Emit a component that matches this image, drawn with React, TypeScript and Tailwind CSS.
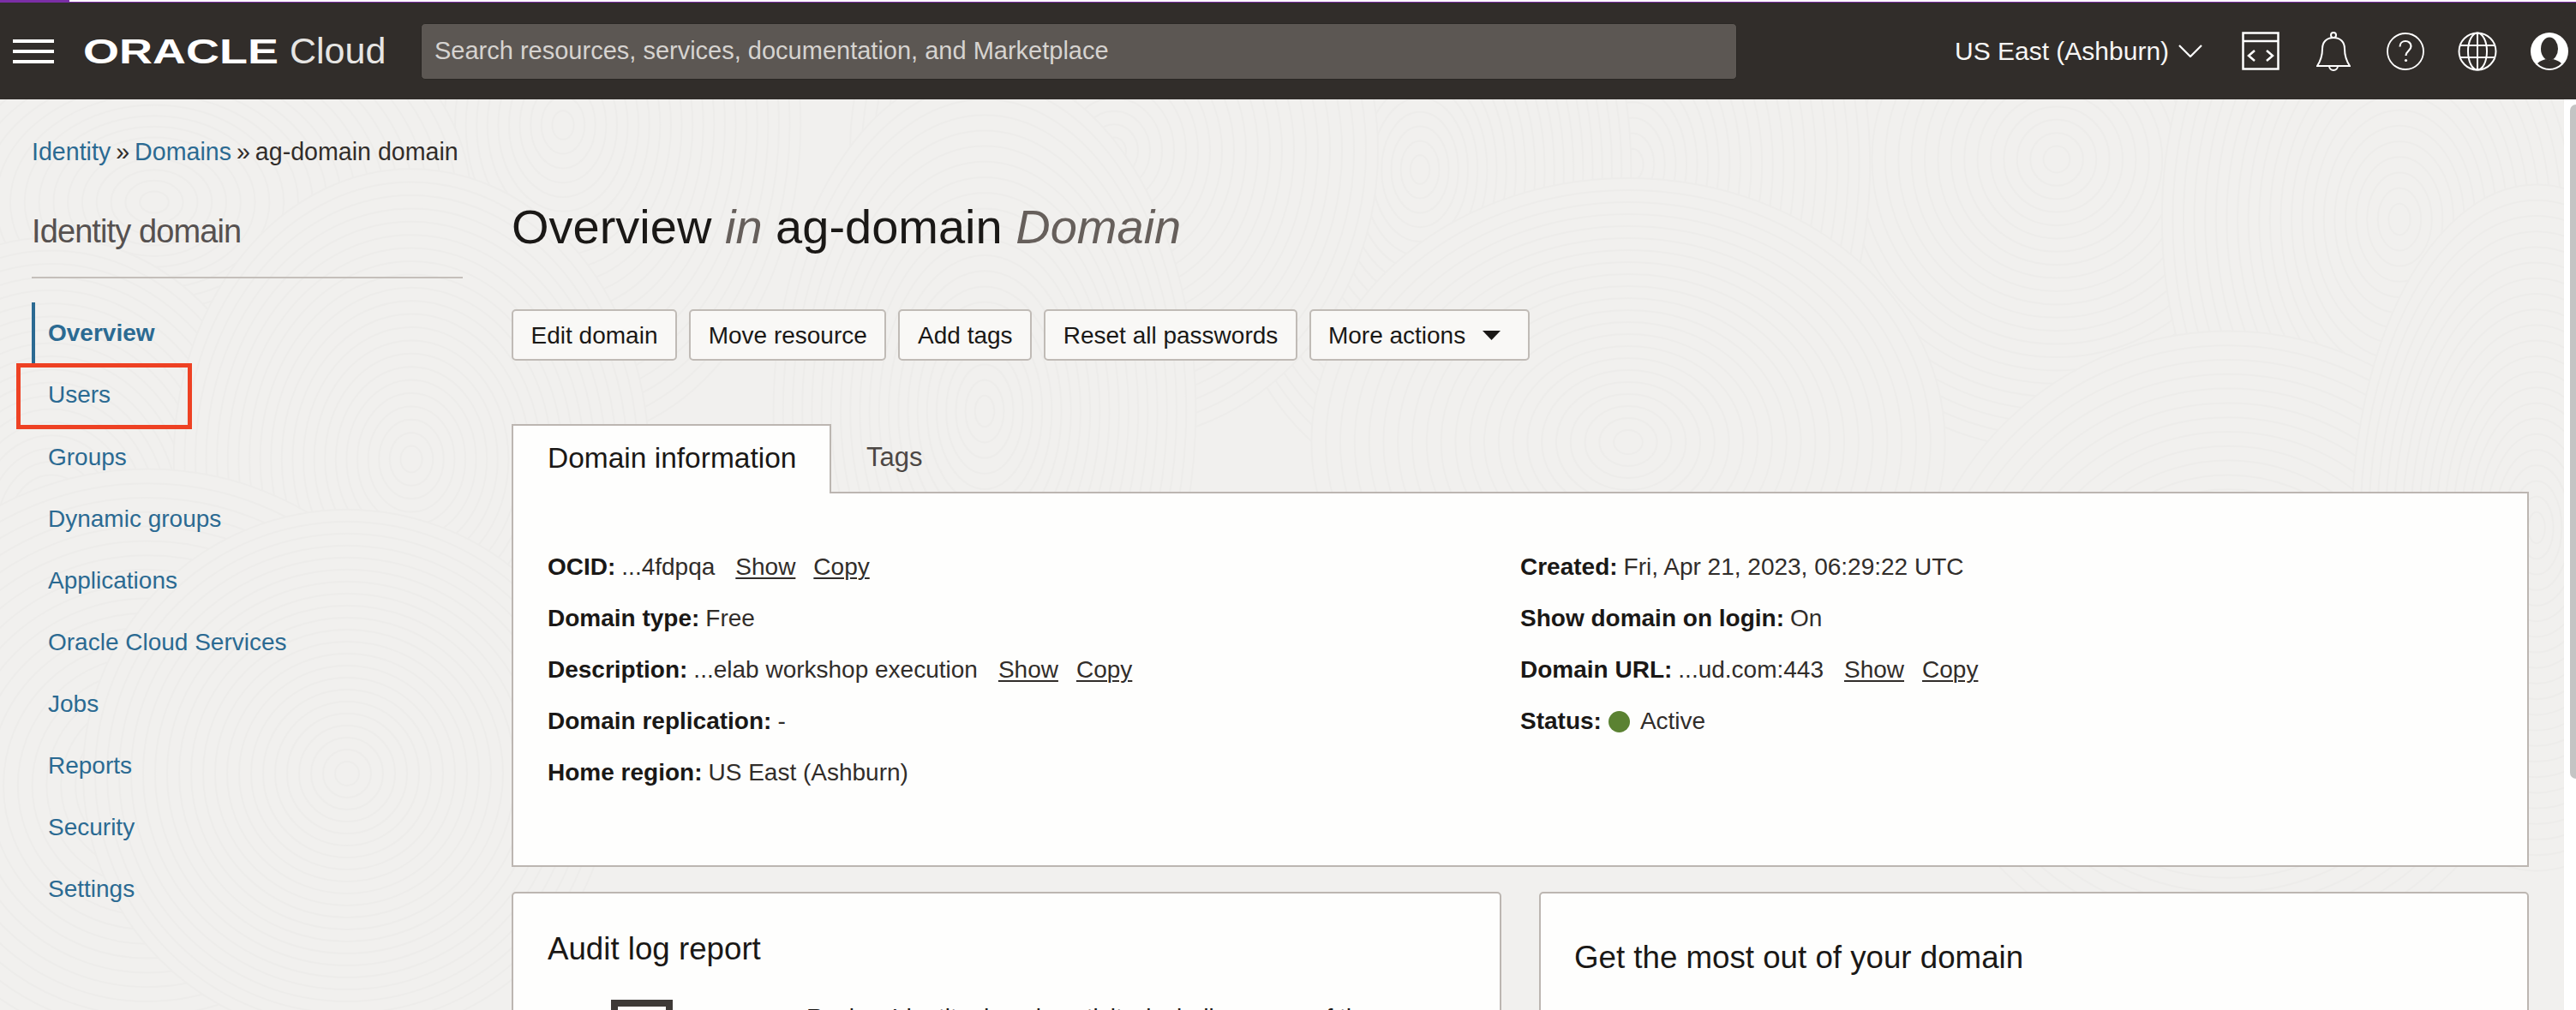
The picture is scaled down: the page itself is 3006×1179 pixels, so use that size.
import React from 'react';

const navItems = ['Groups', 'Dynamic groups', 'Applications', 'Oracle Cloud Services', 'Jobs', 'Reports', 'Security', 'Settings'];
const actions = ['Edit domain', 'Move resource', 'Add tags', 'Reset all passwords'];

// faint fingerprint swirls of the console background: [cx, cy, rx scale, ry scale]
const swirls = [
  [2400, 70, 1.1, 1.1], [2800, 140, 0.9, 1.3], [1905, 76, 0.9, 1.3], [1657, 82, 0.8, 1.2],
  [1300, 60, 1, 1.1], [657, 30, 0.9, 1.2], [180, 120, 1.2, 0.9], [2600, 640, 1.2, 1.2],
  [2960, 500, 0.7, 1.3], [1900, 400, 1.2, 1], [1149, 364, 0.8, 1.3], [60, 500, 0.9, 1.1],
  [480, 420, 0.9, 1.1], [172, 801, 1.2, 1.2], [405, 787, 1, 1],
];

const rings = [308, 294, 280, 266, 252, 238, 224, 210, 196, 182, 168, 154, 140, 126, 112, 98, 84, 70, 56, 42, 28, 14];

const WoodGrain = () => (
  <svg className="absolute inset-0 h-full w-full" fill="#f1f0ee" stroke="#edecea" strokeWidth="2">
    {swirls.map(([cx, cy, sx, sy], i) => (
      <g key={i}>
        {rings.map((r) => (
          <ellipse key={r} cx={cx} cy={cy} rx={r * sx} ry={r * sy} />
        ))}
      </g>
    ))}
  </svg>
);

const CodeIcon = () => (
  <svg width="44" height="45" viewBox="0 0 44 45" fill="none" stroke="#fff" strokeWidth="2.5">
    <rect x="1.5" y="1.5" width="41" height="42" />
    <path d="M2 11h40" />
    <path d="M15 22l-7 6 7 6M29 22l7 6-7 6" strokeWidth="2.5" />
  </svg>
);

const BellIcon = () => (
  <svg width="40" height="46" viewBox="0 0 40 46" fill="none" stroke="#fff" strokeWidth="2">
    <path d="M1 40c4-6 6-12 6-20 0-8 5-13 13-13s13 5 13 13c0 8 2 14 6 20z" />
    <circle cx="20" cy="4" r="3" />
    <path d="M15 40a5 5 0 0 0 10 0" />
  </svg>
);

const HelpIcon = () => (
  <svg width="44" height="44" viewBox="0 0 44 44" fill="none" stroke="#fff" strokeWidth="1.8">
    <circle cx="22" cy="22" r="21" />
    <path d="M15.500 16.500c0-4 3-6.500 6.500-6.500s6.500 2.400 6.500 6c0 5-6 5.500-6 11" strokeWidth="2.200" />
    <circle cx="22.500" cy="32.500" r="1.600" fill="#fff" stroke="none" />
  </svg>
);

const GlobeIcon = () => (
  <svg width="46" height="46" viewBox="0 0 46 46" fill="none" stroke="#fff" strokeWidth="2">
    <circle cx="23" cy="23" r="21.500" />
    <ellipse cx="23" cy="23" rx="11" ry="21.500" />
    <path d="M3 16h40M3 30h40M23 1.500v43" />
  </svg>
);

const AvatarIcon = () => (
  <svg width="44" height="44" viewBox="0 0 44 44">
    <circle cx="22" cy="22" r="22" fill="#fff" />
    <ellipse cx="22" cy="19" rx="10" ry="13.500" fill="#312d2a" />
    <path d="M8 36c3-3 7-4 10-5 2 1.500 6 1.500 8 0 3 1 7 2 10 5-4 4-9 6-14 6s-10-2-14-6z" fill="#312d2a" />
  </svg>
);

const Kv = ({ label, value, actions: links }: { label: string; value: React.ReactNode; actions?: boolean }) => (
  <div className="flex h-[60px] items-center">
    <b className="font-bold text-[#1a1816]">{label}</b>
    <span className="ml-[7px] flex items-center">{value}</span>
    {links && (
      <>
        <a className="ml-[24px] underline decoration-2 underline-offset-[3px]">Show</a>
        <a className="ml-[21px] underline decoration-2 underline-offset-[3px]">Copy</a>
      </>
    )}
  </div>
);

const App: React.FC = () => {
  return (
    <div className="relative flex h-[1179px] w-[3006px] flex-col overflow-hidden bg-[#f1f0ee] font-['Liberation_Sans',Arial,sans-serif] text-[28px] text-[#312d2a]">
      {/* Top strip */}
      <div className="flex h-[3px] bg-white">
        <div className="h-[3px] w-[81px] bg-[#7b2ea6]" />
        <div className="mt-[2px] h-px flex-1 bg-[#7b2ea6]" />
      </div>

      {/* Header */}
      <header className="flex h-[113px] shrink-0 items-center bg-[#312d2a] pl-[15px] text-white">
        <div className="flex w-[48px] flex-col gap-[8px]">
          <span className="h-[4px] bg-white" />
          <span className="h-[4px] bg-white" />
          <span className="h-[4px] bg-white" />
        </div>
        <span className="ml-[34px] inline-block w-[169px] origin-left scale-x-[1.35] text-[40px] leading-none font-bold">ORACLE</span>
        <span className="ml-[72px] w-[153px] text-[43px] leading-none text-[#e6e5e3]">Cloud</span>
        <div className="flex h-[66px] w-[1536px] items-center rounded-[5px] border border-[#2a2724] bg-[#5c5753] pl-[15px] text-[29px] text-[#d6d3d0]">
          Search resources, services, documentation, and Marketplace
        </div>
        <span className="ml-[254px] text-[30px] whitespace-nowrap text-[#f7f6f5]">US East (Ashburn)</span>
        <svg className="ml-[11px]" width="28" height="15" viewBox="0 0 28 15" fill="none" stroke="#fff" strokeWidth="2.200">
          <path d="M1 1l13 13L27 1" />
        </svg>
        <div className="ml-[46px]"><CodeIcon /></div>
        <div className="ml-[43px]"><BellIcon /></div>
        <div className="ml-[42px]"><HelpIcon /></div>
        <div className="ml-[39px]"><GlobeIcon /></div>
        <div className="ml-[39px]"><AvatarIcon /></div>
      </header>

      {/* Page */}
      <div className="relative flex min-h-0 flex-1">
        <WoodGrain />

        <aside className="relative w-[597px] shrink-0 pt-[41px] pr-[57px] pl-[37px]">
          <div className="flex h-[40px] items-center text-[28.6px] whitespace-nowrap text-[#312d2a]">
            <a className="text-[#2b6a92]">Identity</a>
            <span className="mx-[6px]">»</span>
            <a className="text-[#2b6a92]">Domains</a>
            <span className="mx-[6px]">»</span>
            <span>ag-domain domain</span>
          </div>
          <h2 className="mt-[48px] h-[50px] text-[38px] leading-[50px] font-normal tracking-[-0.9px] text-[#565150]">Identity domain</h2>
          <hr className="mt-[28px] border-t-2 border-[#c4bfba]" />
          <ul className="mt-[28px] text-[#2b6a92]">
            <li className="flex h-[71px] items-center border-l-4 border-[#2b6a92] pt-px pl-[15px] font-bold">Overview</li>
            <li className="relative flex h-[74px] items-center pl-[19px]">
              Users
              <span className="absolute top-0 -left-[18px] h-[77px] w-[205px] border-[5px] border-[#ee4123]" />
            </li>
            {navItems.map((item) => (
              <li key={item} className="flex h-[72px] items-center pl-[19px]">{item}</li>
            ))}
          </ul>
        </aside>

        <main className="relative w-[2354px] shrink-0 pt-[114px]">
          <h1 className="h-[70px] text-[56px] leading-[70px] font-normal whitespace-nowrap text-[#1a1816]">
            Overview <i className="text-[#665f5b]">in</i> ag-domain <i className="text-[#665f5b]">Domain</i>
          </h1>

          <div className="mt-[61px] flex gap-[14px]">
            {actions.map((a) => (
              <button key={a} className="h-[60px] rounded-[5px] border-2 border-[#c0bbb6] bg-[#f9f8f6] px-[20.6px] pt-px text-[#1a1816]">{a}</button>
            ))}
            <button className="flex h-[60px] items-center rounded-[5px] border-2 border-[#c0bbb6] bg-[#f9f8f6] pt-px pr-[32px] pl-[20px] text-[#1a1816]">
              More actions
              <svg className="ml-[20px]" width="21" height="11" viewBox="0 0 21 11"><path d="M0 0h21L10.500 11z" fill="#1a1816" /></svg>
            </button>
          </div>

          {/* Tabs */}
          <div className="mt-[74px] flex">
            <div className="relative z-10 -mb-[2px] flex h-[81px] w-[373px] items-center border-x-2 border-t-2 border-[#bcb6b1] bg-[#fefefd] pb-[3px] pl-[40px] text-[33.5px] whitespace-nowrap text-[#1a1816]">Domain information</div>
            <div className="flex h-[79px] items-center pl-[41px] text-[31px] text-[#4c4744]">Tags</div>
          </div>

          <section className="grid h-[438px] grid-cols-[1135px_1fr] border-2 border-[#bcb6b1] bg-[#fefefd] pt-[56px] pl-[40px]">
            <div>
              <Kv label="OCID:" value="...4fdpqa" actions />
              <Kv label="Domain type:" value="Free" />
              <Kv label="Description:" value="...elab workshop execution" actions />
              <Kv label="Domain replication:" value="-" />
              <Kv label="Home region:" value="US East (Ashburn)" />
            </div>
            <div>
              <Kv label="Created:" value="Fri, Apr 21, 2023, 06:29:22 UTC" />
              <Kv label="Show domain on login:" value="On" />
              <Kv label="Domain URL:" value="...ud.com:443" actions />
              <Kv
                label="Status:"
                value={
                  <>
                    <span className="mr-[12px] ml-px h-[25px] w-[25px] rounded-full bg-[#5b8232]" />
                    Active
                  </>
                }
              />
            </div>
          </section>

          {/* Cards */}
          <div className="mt-[29px] grid grid-cols-2 gap-[44px]">
            <div className="h-[300px] rounded-[5px] border-2 border-[#bcb6b1] bg-[#fefefd] pt-[42px] pl-[40px]">
              <h3 className="h-[46px] text-[36.7px] leading-[46px] font-normal text-[#1a1816]">Audit log report</h3>
              <div className="mt-[36px] flex">
                <div className="ml-[74px] h-[90px] w-[72px] border-8 border-[#3e3a37]" />
                <p className="ml-[156px] text-[#1a1816]">Review Identity domain activity, including some of the</p>
              </div>
            </div>
            <div className="h-[300px] rounded-[5px] border-2 border-[#bcb6b1] bg-[#fefefd] pt-[52px] pl-[39px]">
              <h3 className="h-[46px] text-[36.7px] leading-[46px] font-normal text-[#1a1816]">Get the most out of your domain</h3>
            </div>
          </div>
        </main>

        {/* Scrollbar */}
        <div className="relative ml-auto w-[14px] bg-white pl-[7px]">
          <div className="mt-[6px] h-[787px] rounded-l-[8px] bg-[#c4c4c4]" />
        </div>
      </div>
    </div>
  );
};

export default App;
